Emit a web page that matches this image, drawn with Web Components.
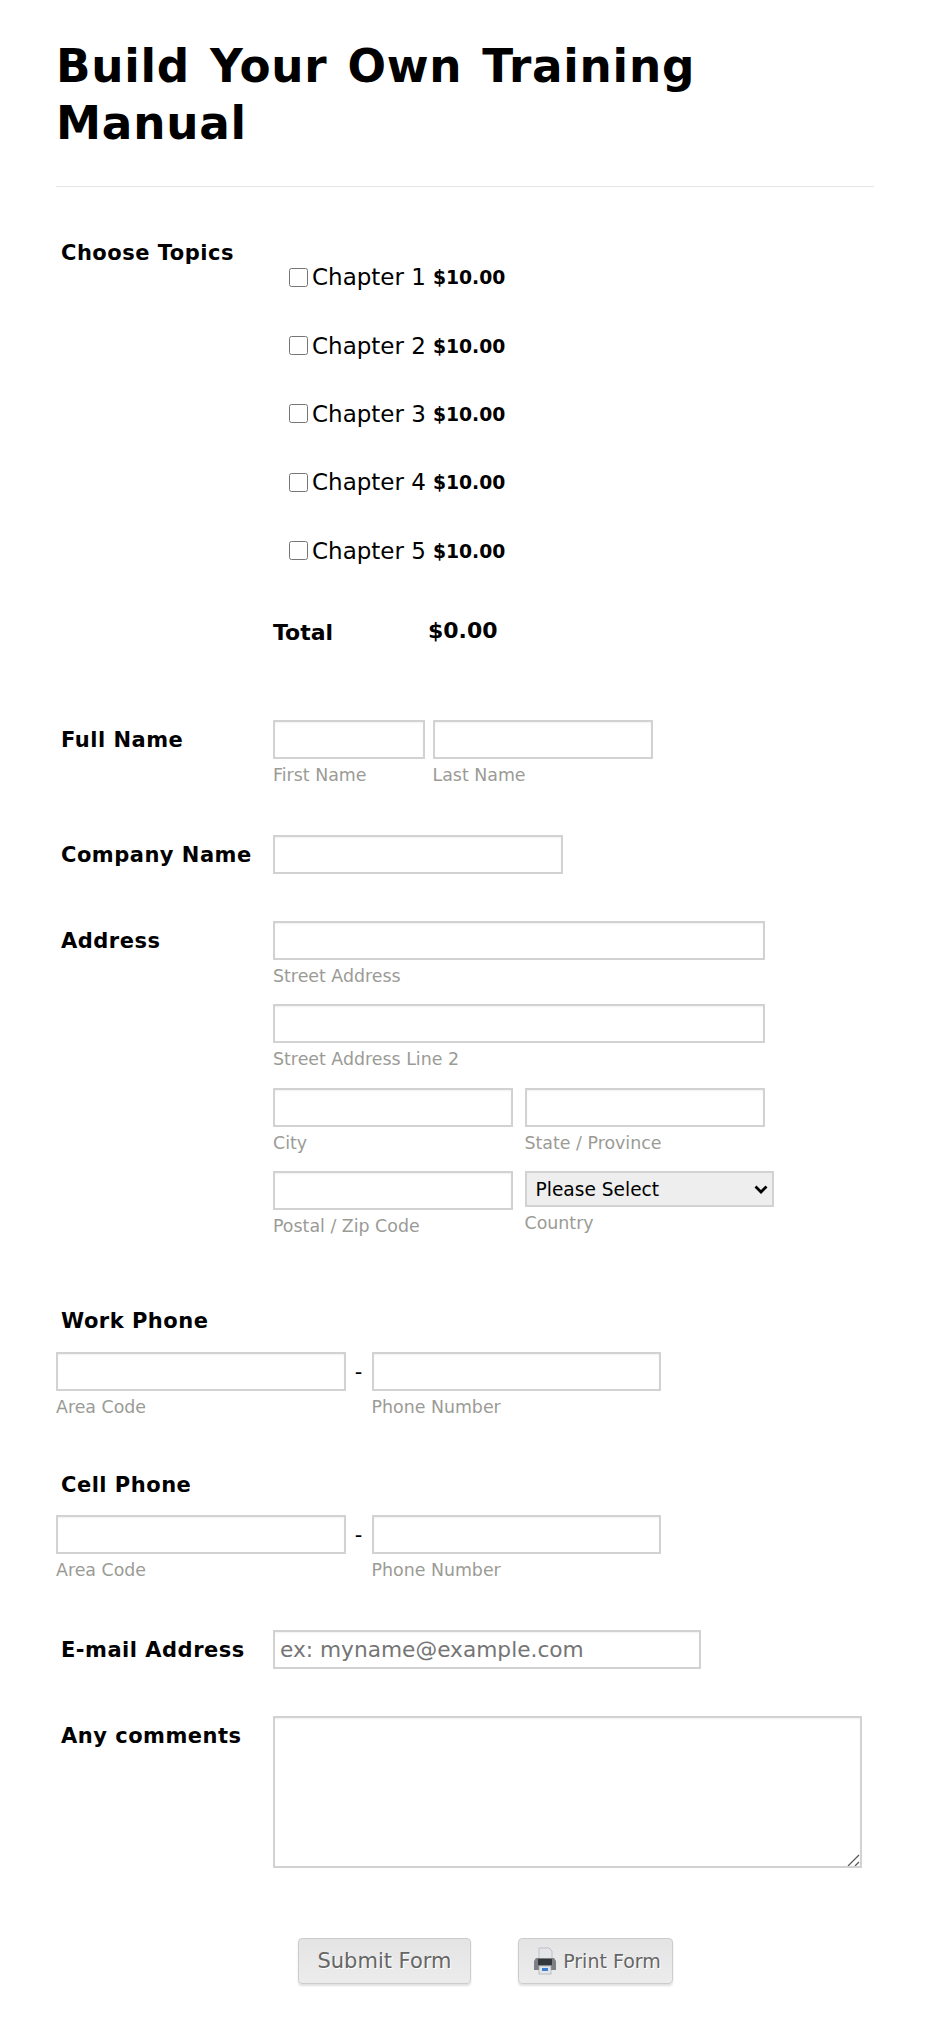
<!DOCTYPE html>
<html>
<head>
<meta charset="utf-8">
<title>Build Your Own Training Manual</title>
<style>
    body {
        margin: 0;
        background: #fff;
        color: #000;
        font-family: "DejaVu Sans", Verdana, sans-serif;
    }
    .m-choose { margin-top: 56px; --label-lh: 20px; }
    .m-name { margin-top: 73px; }
    .m-company { margin-top: 50px; }
    .m-address { margin-top: 46px; }
    .m-work { margin-top: 71px; }
    .m-cell { margin-top: 54px; }
    .m-email { margin-top: 50px; }
    .m-comments { margin-top: 45.5px; }
</style>
</head>
<body>

<template id="form-page-template">
    <style>
        :host { display: block; padding: 38px 56px 38px; }
        h1 {
            margin: 0;
            padding-bottom: 34px;
            border-bottom: 1px solid #e6e6e6;
            font-size: 45.3px;
            letter-spacing: .75px;
            word-spacing: 3.5px;
            line-height: 57px;
            font-weight: bold;
        }
        .title { display: block; width: 700px; }
    </style>
    <h1><span class="title"><slot name="title"></slot></span></h1>
    <slot></slot>
</template>

<template id="form-row-template">
    <style>
        :host { display: grid; grid-template-columns: 217px 1fr; }
        :host([stacked]) { grid-template-columns: 1fr; }
        .label {
            padding-left: 5px;
            font-size: 21px;
            letter-spacing: .5px;
            font-weight: bold;
            line-height: var(--label-lh, 40px);
            white-space: nowrap;
        }
        :host([stacked]) .label { margin-bottom: 16.5px; line-height: 28px; }
    </style>
    <div class="label" id="label"></div>
    <div class="body"><slot></slot></div>
</template>

<template id="field-row-template">
    <style>
        :host { display: flex; align-items: flex-start; margin-bottom: 19.5px; }
        :host(:last-child) { margin-bottom: 0; }
        ::slotted(.sep) { width: 26px; text-align: center; font-size: 21px; line-height: 41px; }
    </style>
    <slot></slot>
</template>

<template id="text-field-template">
    <style>
        :host { display: block; margin-right: 7.5px; }
        input {
            display: block;
            box-sizing: border-box;
            width: 100%;
            height: 39px;
            padding: 0 5px;
            border: 2px solid #d2d2d2;
            box-shadow: inset 0 1px 2px rgba(0, 0, 0, .06);
            background: #fff;
            font: 21.7px "DejaVu Sans", Verdana, sans-serif;
            outline: none;
        }
        input::placeholder { color: #757575; opacity: 1; }
        .sub {
            margin-top: 6px;
            color: #9b9b96;
            font-size: 17.4px;
            line-height: 20px;
            white-space: nowrap;
        }
        .sub:empty { display: none; }
    </style>
    <input type="text" id="input">
    <div class="sub" id="sub"></div>
</template>

<template id="select-field-template">
    <style>
        :host { display: block; }
        select {
            display: block;
            box-sizing: border-box;
            width: 249px;
            height: 36px;
            padding: 0 9px;
            border: 2px solid #d2d2d2;
            border-radius: 0;
            appearance: none;
            background: #eee url("data:image/svg+xml,%3Csvg xmlns='http://www.w3.org/2000/svg' width='14' height='9'%3E%3Cpath d='M1.5 1.5L7 7l5.5-5.5' fill='none' stroke='%23000' stroke-width='2.8'/%3E%3C/svg%3E") no-repeat right 4px center;
            color: #000;
            font: 18.6px "DejaVu Sans", Verdana, sans-serif;
        }
        .sub {
            margin-top: 6px;
            color: #9b9b96;
            font-size: 17.4px;
            line-height: 20px;
        }
    </style>
    <select></select>
    <div class="sub" id="sub"></div>
</template>

<template id="topic-check-template">
    <style>
        :host {
            display: flex;
            align-items: center;
            height: 68.4px;
            padding-left: 16px;
            white-space: nowrap;
        }
        input { width: 19px; height: 19px; margin: 0 4px 0 0; flex: none; }
        .name { font-size: 23px; margin-right: 7px; }
        .price { font-size: 18.8px; font-weight: bold; padding-top: 1px; }
    </style>
    <input type="checkbox">
    <span class="name" id="name"></span>
    <span class="price" id="price"></span>
</template>

<template id="total-line-template">
    <style>
        :host { display: flex; font-weight: bold; font-size: 22px; margin-top: 34px; line-height: 28px; }
        .k { width: 155px; }
        .v { margin-top: -2px; }
    </style>
    <span class="k"><slot name="key"></slot></span>
    <span class="v"><slot name="value"></slot></span>
</template>

<template id="form-button-template">
    <style>
        :host { display: block; }
        button {
            display: flex;
            align-items: center;
            justify-content: center;
            box-sizing: border-box;
            height: 46px;
            padding: 0 0 0 var(--btn-pad, 0);
            width: 100%;
            border: 1px solid #ccc;
            border-radius: 4px;
            background: linear-gradient(#e4e4e4, #ececec);
            box-shadow: 0 2px 2px rgba(0, 0, 0, .12);
            color: #666;
            font: var(--btn-size, 21px) "DejaVu Sans", Verdana, sans-serif;
            text-shadow: 1px 1px 0 #fff;
        }
        ::slotted(svg) { margin-right: 6px; }
    </style>
    <button type="button"><slot></slot></button>
</template>

<template id="button-bar-template">
    <style>
        :host { display: flex; margin-top: 70px; padding-left: 242px; gap: 47px; }
    </style>
    <slot></slot>
</template>

<template id="comment-box-template">
    <style>
        :host { display: block; position: relative; width: 589px; }
        textarea {
            display: block;
            box-sizing: border-box;
            width: 100%;
            height: 152px;
            margin: 0;
            border: 2px solid #d2d2d2;
            box-shadow: inset 0 1px 2px rgba(0, 0, 0, .06);
            outline: none;
            resize: none;
        }
        svg { position: absolute; right: 2px; bottom: 2px; }
    </style>
    <textarea></textarea>
    <svg width="16" height="16" viewBox="0 0 16 16">
        <path d="M4 16L15 5M11 16l4-4" fill="none" stroke="#555" stroke-width="1.2"/>
    </svg>
</template>

<form-page>
    <span slot="title">Build Your Own Training Manual</span>

    <form-row label="Choose Topics" class="m-choose">
        <topic-check name="Chapter 1" price="$10.00"></topic-check>
        <topic-check name="Chapter 2" price="$10.00"></topic-check>
        <topic-check name="Chapter 3" price="$10.00"></topic-check>
        <topic-check name="Chapter 4" price="$10.00"></topic-check>
        <topic-check name="Chapter 5" price="$10.00"></topic-check>
        <total-line><span slot="key">Total</span><span slot="value">$0.00</span></total-line>
    </form-row>

    <form-row label="Full Name" class="m-name">
        <field-row>
            <text-field style="width:152px" sub="First Name"></text-field>
            <text-field style="width:220px" sub="Last Name"></text-field>
        </field-row>
    </form-row>

    <form-row label="Company Name" class="m-company">
        <field-row><text-field style="width:289.5px"></text-field></field-row>
    </form-row>

    <form-row label="Address" class="m-address">
        <field-row style="margin-bottom:18.5px"><text-field style="width:491.5px" sub="Street Address"></text-field></field-row>
        <field-row style="margin-bottom:18.5px"><text-field style="width:491.5px" sub="Street Address Line 2"></text-field></field-row>
        <field-row style="margin-bottom:18.5px">
            <text-field style="width:240px;margin-right:11.5px" sub="City"></text-field>
            <text-field style="width:240px" sub="State / Province"></text-field>
        </field-row>
        <field-row>
            <text-field style="width:240px;margin-right:11.5px" sub="Postal / Zip Code"></text-field>
            <select-field sub="Country"><option>Please Select</option></select-field>
        </field-row>
    </form-row>

    <form-row label="Work Phone" class="m-work" stacked>
        <field-row>
            <text-field style="width:289.5px;margin:0" sub="Area Code"></text-field>
            <span class="sep">-</span>
            <text-field style="width:289.5px" sub="Phone Number"></text-field>
        </field-row>
    </form-row>

    <form-row label="Cell Phone" class="m-cell" stacked>
        <field-row>
            <text-field style="width:289.5px;margin:0" sub="Area Code"></text-field>
            <span class="sep">-</span>
            <text-field style="width:289.5px" sub="Phone Number"></text-field>
        </field-row>
    </form-row>

    <form-row label="E-mail Address" class="m-email">
        <field-row><text-field style="width:427.5px" placeholder="ex: myname@example.com"></text-field></field-row>
    </form-row>

    <form-row label="Any comments" class="m-comments">
        <comment-box></comment-box>
    </form-row>

    <button-bar>
        <form-button style="width:173px">Submit Form</form-button>
        <form-button style="width:155px;--btn-size:19px;--btn-pad:3px">
            <svg width="24" height="28" viewBox="0 0 24 28">
                <path d="M6 1h10l3 3v9H6z" fill="#e4e6ea" stroke="#bcc0c4"/>
                <path d="M3 11h18l2 3v9H1v-9z" fill="#7c8084"/>
                <rect x="5" y="12" width="14" height="6" fill="#35383b"/>
                <rect x="6" y="19" width="12" height="8" fill="#e2e5ea" stroke="#9ea2a6" stroke-width=".6"/>
                <rect x="9" y="21" width="6" height="3" fill="#3f7fd0"/>
            </svg>Print Form
        </form-button>
    </button-bar>
</form-page>

<script>
    // plain elements: clone the template, nothing else to wire up
    function plain(tag) {
        customElements.define(tag, class extends HTMLElement {
            constructor() {
                super();
                this.attachShadow({ mode: 'open' });
                this.shadowRoot.appendChild(document.getElementById(tag + '-template').content.cloneNode(true));
            }
        });
    }
    ['form-page', 'field-row', 'total-line', 'form-button', 'button-bar', 'comment-box'].forEach(plain);

    class FormRow extends HTMLElement {
        constructor() {
            super();
            this.attachShadow({ mode: 'open' });
            this.shadowRoot.appendChild(document.getElementById('form-row-template').content.cloneNode(true));
        }
        connectedCallback() {
            this.shadowRoot.querySelector('#label').textContent = this.getAttribute('label');
        }
    }
    customElements.define('form-row', FormRow);

    class TextField extends HTMLElement {
        constructor() {
            super();
            this.attachShadow({ mode: 'open' });
            this.shadowRoot.appendChild(document.getElementById('text-field-template').content.cloneNode(true));
        }
        connectedCallback() {
            this.shadowRoot.querySelector('#sub').textContent = this.getAttribute('sub') || '';
            if (this.hasAttribute('placeholder')) {
                this.shadowRoot.querySelector('#input').placeholder = this.getAttribute('placeholder');
            }
        }
    }
    customElements.define('text-field', TextField);

    class SelectField extends HTMLElement {
        constructor() {
            super();
            this.attachShadow({ mode: 'open' });
            this.shadowRoot.appendChild(document.getElementById('select-field-template').content.cloneNode(true));
        }
        connectedCallback() {
            // options can't go through a slot inside a select, so copy them over
            const select = this.shadowRoot.querySelector('select');
            select.innerHTML = this.innerHTML;
            this.shadowRoot.querySelector('#sub').textContent = this.getAttribute('sub') || '';
        }
    }
    customElements.define('select-field', SelectField);

    class TopicCheck extends HTMLElement {
        constructor() {
            super();
            this.attachShadow({ mode: 'open' });
            this.shadowRoot.appendChild(document.getElementById('topic-check-template').content.cloneNode(true));
        }
        connectedCallback() {
            this.shadowRoot.querySelector('#name').textContent = this.getAttribute('name');
            this.shadowRoot.querySelector('#price').textContent = this.getAttribute('price');
        }
    }
    customElements.define('topic-check', TopicCheck);
</script>
</body>
</html>
